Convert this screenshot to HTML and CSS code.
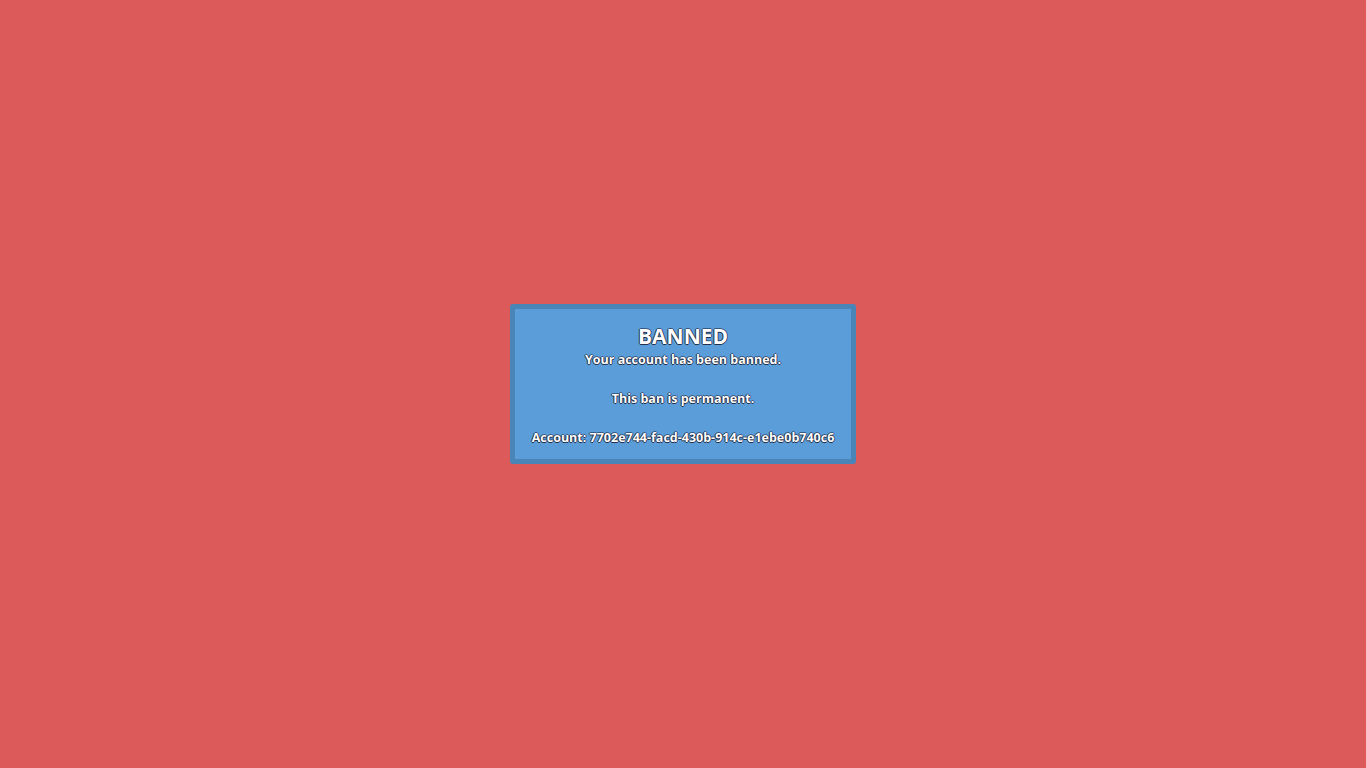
FILE: index.html
```html
<!DOCTYPE html>
<html>
<head>
<meta charset="utf-8">
<title>Banned</title>
<link rel="stylesheet" href="styles.css">
</head>
<body>
<div class="ban-box">
  <div class="ban-title">BANNED</div>
  <div class="ban-text">Your account has been banned.<br><br>This ban is permanent.<br><br>Account: 7702e744-facd-430b-914c-e1ebe0b740c6</div>
</div>
</body>
</html>
```
FILE: styles.css
```css
html, body {
  margin: 0;
  padding: 0;
  height: 100%;
}
body {
  background: #dc5b5a;
  display: flex;
  align-items: center;
  justify-content: center;
  font-family: "Open Sans", "DejaVu Sans", sans-serif;
  color: #ffffff;
}
.ban-box {
  background: #5b9dd9;
  border: 5px solid #4a85b8;
  border-radius: 3px;
  padding: 13px 16.5px 11px;
  text-align: center;
  text-shadow: -1px 0 0 rgba(20,20,40,0.8), 1px 0 0 rgba(20,20,40,0.6), 0 1px 0 rgba(20,20,40,0.8), 0 -1px 0 rgba(20,20,40,0.5);
}
.ban-title {
  font-size: 21px;
  font-weight: 700;
  line-height: 28px;
}
.ban-text {
  font-size: 12.5px;
  font-weight: 700;
  line-height: 19.5px;
}
```
